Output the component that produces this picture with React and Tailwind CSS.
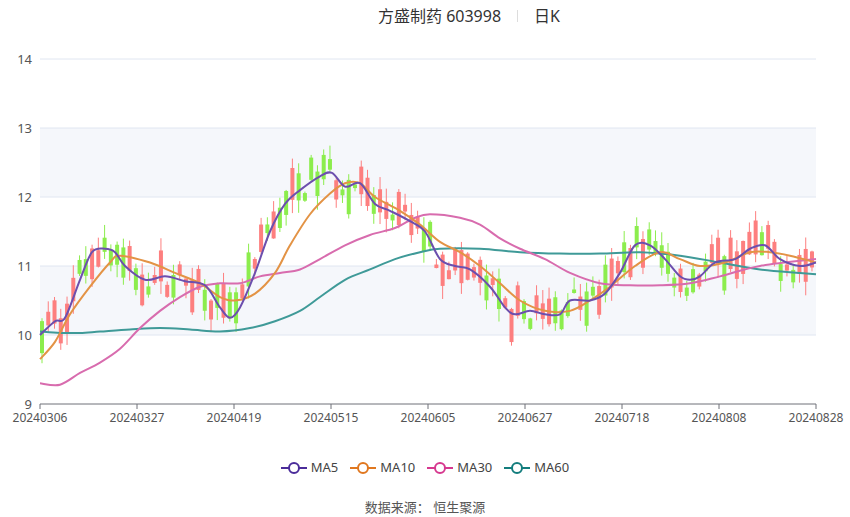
import React from "react";

const X0 = 40;
const X1 = 816;
const py = (p) => 404 - (p - 9) * 69;

const ma5 = [[40,10.0],[55,10.2],[65,10.25],[80,10.8],[92,11.2],[105,11.25],[115,11.2],[125,11.0],[145,10.8],[165,10.85],[185,10.78],[205,10.72],[220,10.4],[230,10.25],[240,10.4],[255,10.9],[270,11.5],[285,11.9],[300,12.1],[320,12.3],[332,12.35],[345,12.15],[360,12.2],[375,11.9],[390,11.8],[410,11.65],[425,11.5],[440,11.1],[455,11.0],[470,10.95],[490,10.7],[505,10.4],[515,10.3],[530,10.35],[545,10.3],[560,10.3],[570,10.5],[590,10.5],[605,10.6],[620,10.9],[635,11.3],[650,11.3],[665,11.1],[680,10.85],[690,10.8],[700,10.85],[715,11.05],[735,11.1],[750,11.25],[765,11.3],[780,11.1],[800,11.0],[816,11.05]];
const ma10 = [[40,9.65],[55,9.9],[70,10.3],[90,10.7],[110,11.05],[120,11.15],[150,11.05],[175,10.9],[200,10.75],[220,10.55],[235,10.5],[255,10.6],[275,10.9],[290,11.3],[310,11.75],[330,12.05],[345,12.2],[360,12.2],[375,12.0],[400,11.8],[420,11.6],[440,11.35],[460,11.2],[480,11.0],[500,10.75],[520,10.5],[545,10.35],[570,10.35],[590,10.5],[610,10.7],[635,11.0],[660,11.2],[680,11.1],[700,11.0],[725,11.05],[750,11.2],[770,11.2],[790,11.15],[816,11.05]];
const ma30 = [[40,9.3],[60,9.28],[80,9.45],[100,9.6],[120,9.8],[140,10.1],[160,10.35],[180,10.55],[200,10.7],[220,10.75],[240,10.75],[260,10.85],[280,10.9],[300,10.95],[320,11.1],[345,11.3],[370,11.45],[395,11.55],[415,11.7],[430,11.75],[460,11.7],[480,11.6],[500,11.4],[520,11.25],[545,11.1],[570,10.9],[600,10.75],[630,10.72],[660,10.72],[690,10.75],[720,10.85],[760,11.0],[816,11.1]];
const ma60 = [[40,10.05],[60,10.03],[80,10.03],[100,10.05],[130,10.08],[160,10.1],[190,10.08],[220,10.05],[250,10.1],[275,10.2],[300,10.35],[320,10.55],[345,10.8],[370,10.95],[395,11.1],[420,11.2],[440,11.25],[480,11.25],[520,11.2],[560,11.18],[600,11.18],[640,11.2],[680,11.15],[720,11.05],[760,10.95],[800,10.9],[816,10.88]];

// catmull-rom to bezier path
const smooth = (pts) => {
  const p = pts.map(([x, v]) => [x, py(v)]);
  let d = `M${p[0][0]},${p[0][1]}`;
  for (let i = 0; i < p.length - 1; i++) {
    const a = p[i - 1] || p[i], b = p[i], c = p[i + 1], e = p[i + 2] || c;
    d += ` C${b[0] + (c[0] - a[0]) / 6},${b[1] + (c[1] - a[1]) / 6} ${c[0] - (e[0] - b[0]) / 6},${c[1] - (e[1] - b[1]) / 6} ${c[0]},${c[1]}`;
  }
  return d;
};

const interp = (pts, x) => {
  for (let i = 0; i < pts.length - 1; i++) {
    if (x <= pts[i + 1][0]) {
      const t = (x - pts[i][0]) / (pts[i + 1][0] - pts[i][0]);
      return pts[i][1] + t * (pts[i + 1][1] - pts[i][1]);
    }
  }
  return pts[pts.length - 1][1];
};

let seed = 7;
const rnd = () => {
  seed = (seed * 16807) % 2147483647;
  return seed / 2147483647;
};

const candles = Array.from({ length: 124 }, (_, i) => {
  const x = X0 + i * 6.26;
  const c = interp(ma5, x + 4);
  const up = rnd() > 0.5;
  const body = 0.05 + rnd() * 0.45;
  const mid = c + (rnd() - 0.5) * 0.4;
  const hi = mid + body / 2;
  const lo = mid - body / 2;
  return { x, up, hi, lo, wh: hi + rnd() * 0.2, wl: lo - rnd() * 0.2 };
});

const labels = ["20240306", "20240327", "20240419", "20240515", "20240605", "20240627", "20240718", "20240808", "20240828"];

const legend = [
  { name: "MA5", color: "#4b2c9a" },
  { name: "MA10", color: "#e0771f" },
  { name: "MA30", color: "#d6388f" },
  { name: "MA60", color: "#137d7d" },
];

export default function App() {
  return (
    <div className="w-[850px] h-[517px] bg-white relative" style={{ fontFamily: '"Noto Sans", "Noto Sans CJK SC", sans-serif' }}>
      <div className="h-[32px] flex items-center justify-center pl-[88px] text-[16px] text-[#333]">
        <span>方盛制药 603998</span>
        <span className="mx-4 w-px h-[12px] bg-[#ddd]" />
        <span>日K</span>
      </div>
      <svg width="850" height="420" viewBox="0 32 850 420" className="block">
        <rect x={X0} y={py(13)} width={X1 - X0} height={69} fill="#f5f7fb" />
        <rect x={X0} y={py(11)} width={X1 - X0} height={69} fill="#f5f7fb" />
        {[10, 11, 12, 13, 14].map((v) => (
          <g key={v}>
            <line x1={X0} x2={X1} y1={py(v)} y2={py(v)} stroke="#e0e6f1" />
            <text x={32} y={py(v) + 5} textAnchor="end" fontSize="13" fill="#555">{v}</text>
          </g>
        ))}
        <text x={32} y={py(9) + 5} textAnchor="end" fontSize="13" fill="#555">9</text>
        {candles.map((c, i) => {
          const col = c.up ? "#fd7f7f" : "#8ced4d";
          return (
            <g key={i}>
              <line x1={c.x + 2} x2={c.x + 2} y1={py(c.wh)} y2={py(c.wl)} stroke={col} />
              <rect x={c.x} y={py(c.hi)} width={4} height={Math.max(1, (c.hi - c.lo) * 69)} fill={col} />
            </g>
          );
        })}
        <path d={smooth(ma60)} fill="none" stroke="#3f9a98" strokeWidth="2" />
        <path d={smooth(ma30)} fill="none" stroke="#d86cae" strokeWidth="2" />
        <path d={smooth(ma10)} fill="none" stroke="#e39345" strokeWidth="2" />
        <path d={smooth(ma5)} fill="none" stroke="#6c4fae" strokeWidth="2" />
        <line x1={X0} x2={X1} y1={404} y2={404} stroke="#6e7079" />
        {labels.map((l, i) => {
          const x = X0 + i * 97;
          return (
            <g key={l}>
              <line x1={x} x2={x} y1={404} y2={409} stroke="#6e7079" />
              <text x={x} y={422} textAnchor="middle" fontSize="12" fill="#555">{l}</text>
            </g>
          );
        })}
      </svg>
      <div className="flex justify-center gap-[12px] text-[13px] text-[#444] mt-[6px]">
        {legend.map((l) => (
          <div key={l.name} className="flex items-center gap-[4px]">
            <svg width="26" height="14">
              <line x1="0" x2="26" y1="7" y2="7" stroke={l.color} strokeWidth="2" />
              <circle cx="13" cy="7" r="5" fill="white" stroke={l.color} strokeWidth="2" />
            </svg>
            <span>{l.name}</span>
          </div>
        ))}
      </div>
      <div className="text-center text-[13px] text-[#555] mt-[20px]">数据来源：&nbsp;恒生聚源</div>
    </div>
  );
}
